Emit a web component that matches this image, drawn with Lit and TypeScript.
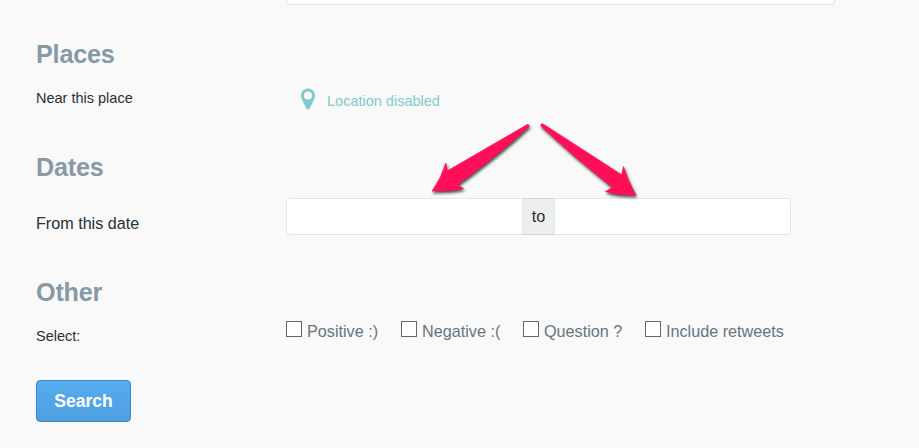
import { LitElement, html, css } from "lit";
import { customElement } from "lit/decorators.js";

@customElement("app-root")
export class AppRoot extends LitElement {
  static styles = css`
    :host {
      display: block;
      position: relative;
      box-sizing: border-box;
      height: 448px;
      overflow: hidden;
      padding: 0 84px 0 36px;
      background: #f9f9f9;
      color: #292f33;
      font: 16px/20px "Liberation Sans", Arial, sans-serif;
    }
    * { box-sizing: border-box; }
    .row { display: grid; grid-template-columns: 250px 1fr; }
    .query { height: 5px; }
    .query-field {
      grid-column: 2;
      height: 5px;
      background: #fff;
      border: 1px solid #e1e8ed;
      border-top: 0;
      border-radius: 0 0 4px 4px;
    }
    h2 {
      margin: 0;
      height: 30px;
      color: #8899a6;
      font-size: 25.2px;
      line-height: 30px;
      letter-spacing: -0.2px;
    }
    .places { padding-top: 34px; height: 113px; }
    .dates { padding-top: 34px; height: 125px; }
    .other { padding-top: 34px; height: 137px; }
    .places .row { padding-top: 19px; }
    .dates .row { padding-top: 16px; }
    .other .row { padding-top: 14px; }
    .small { font-size: 14.5px; }
    .select { padding-top: 5px; }
    .location {
      display: flex;
      align-items: center;
      gap: 12px;
      height: 26px;
      padding-left: 15px;
      color: #83cacc;
      font-size: 14.5px;
    }
    .location svg { display: block; margin-bottom: 4px; }
    .date-label { padding-top: 15px; font-size: 16.15px; }
    .range { display: flex; width: 505px; height: 37px; }
    .range input {
      flex: 1;
      min-width: 0;
      margin: 0;
      padding: 0 10px;
      background: #fff;
      border: 1px solid #e1e8ed;
      font: inherit;
      outline: 0;
    }
    .range .start { border-radius: 4px 0 0 4px; border-right: 0; }
    .range .end { border-radius: 0 4px 4px 0; border-left: 0; }
    .to {
      width: 33px;
      background: #eee;
      border: 1px solid #ccd6dd;
      border-left-color: #e1e8ed;
      border-right-color: #e1e8ed;
      font-size: 16.2px;
      line-height: 35px;
      text-align: center;
    }
    .checks { display: flex; color: #66757f; font-size: 16.2px; }
    .checks label { display: flex; gap: 5px; white-space: nowrap; }
    .c0 { width: 115px; }
    .c1, .c2 { width: 122px; }
    .checks input {
      appearance: none;
      flex: none;
      width: 16px;
      height: 16px;
      margin: 0;
      background: #fff;
      border: 1px solid #666;
    }
    button {
      display: block;
      width: 95px;
      height: 42px;
      margin: 0;
      padding: 0;
      border: 1px solid #3b88c3;
      border-radius: 4px;
      background: linear-gradient(#55acee, #4f9fdf);
      color: #fff;
      font: bold 17.5px/40px "Liberation Sans", Arial, sans-serif;
    }
    .arrows {
      position: absolute;
      left: 420px;
      top: 115px;
      filter: drop-shadow(1px 2px 1.5px rgba(0, 0, 0, 0.7));
      pointer-events: none;
    }
  `;

  private options = ["Positive :)", "Negative :(", "Question ?", "Include retweets"];

  render() {
    return html`
      <div class="row query"><div class="query-field"></div></div>
      <section class="places">
        <h2>Places</h2>
        <div class="row">
          <div class="small">Near this place</div>
          <div class="location">
            <svg width="14" height="22" viewBox="0 0 14 22">
              <path fill="currentColor" fill-rule="evenodd"
                d="M7 .5C3.100 .5 0 3.500 0 7.300C0 9.200 .4 10.300 1.200 12L5.300 20.600Q7 22.600 8.700 20.600L12.800 12C13.600 10.300 14 9.200 14 7.300C14 3.500 10.900 .5 7 .5ZM7 3.400a4 4 0 1 1 0 8a4 4 0 0 1 0-8Z" />
            </svg>
            <span>Location disabled</span>
          </div>
        </div>
      </section>
      <section class="dates">
        <h2>Dates</h2>
        <div class="row">
          <div class="date-label">From this date</div>
          <div class="range">
            <input class="start" type="text" aria-label="Start date" />
            <span class="to">to</span>
            <input class="end" type="text" aria-label="End date" />
          </div>
        </div>
      </section>
      <section class="other">
        <h2>Other</h2>
        <div class="row">
          <div class="small select">Select:</div>
          <div class="checks">
            ${this.options.map(
              (text, i) => html`<label class="c${i}"><input type="checkbox" /><span>${text}</span></label>`
            )}
          </div>
        </div>
      </section>
      <button type="button">Search</button>
      <svg class="arrows" width="230" height="90" viewBox="0 0 230 90">
        <g fill="#ff0f57" stroke="#ff0f57" stroke-width=".8" stroke-linejoin="round">
          <path d="M107.500 9.500Q109.500 9.500 109 11.500Q76 42 37 70L43.500 73.500Q34 76 12.200 76Q22 62 25.800 48L27.200 56Z" />
          <path d="M121 9.200L122.500 8.800L201.800 60L203.500 51.500Q207 64 215.800 80Q198 80.500 185.500 76.500L192.500 72.500Q154 42 121 11Z" />
        </g>
      </svg>
    `;
  }
}
